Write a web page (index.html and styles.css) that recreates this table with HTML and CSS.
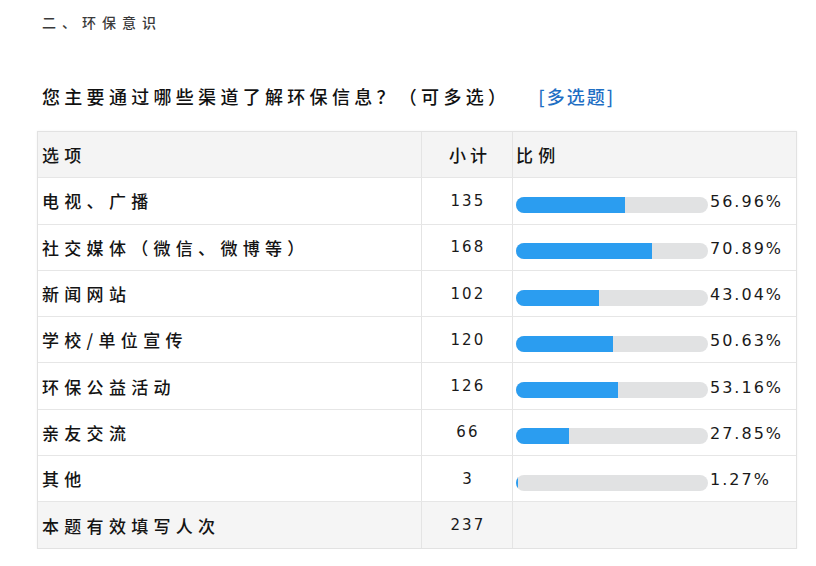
FILE: index.html
```html
<!DOCTYPE html>
<html lang="zh">
<head>
<meta charset="utf-8">
<link rel="stylesheet" href="styles.css">
</head>
<body>
<div class="page">
  <div class="section-title">二、环保意识</div>
  <div class="question">您主要通过哪些渠道了解环保信息？（可多选）<span class="qtype">[多选题]</span></div>
  <div class="table">
    <div class="row head">
      <div class="cell c-opt">选项</div>
      <div class="cell c-num">小计</div>
      <div class="cell c-pct">比例</div>
    </div>
    <div class="row">
      <div class="cell c-opt">电视、广播</div>
      <div class="cell c-num num">135</div>
      <div class="cell c-pct"><div class="bar"><div class="fill" style="width:56.96%"></div></div><span class="pct">56.96%</span></div>
    </div>
    <div class="row">
      <div class="cell c-opt">社交媒体（微信、微博等）</div>
      <div class="cell c-num num">168</div>
      <div class="cell c-pct"><div class="bar"><div class="fill" style="width:70.89%"></div></div><span class="pct">70.89%</span></div>
    </div>
    <div class="row">
      <div class="cell c-opt">新闻网站</div>
      <div class="cell c-num num">102</div>
      <div class="cell c-pct"><div class="bar"><div class="fill" style="width:43.04%"></div></div><span class="pct">43.04%</span></div>
    </div>
    <div class="row">
      <div class="cell c-opt">学校/单位宣传</div>
      <div class="cell c-num num">120</div>
      <div class="cell c-pct"><div class="bar"><div class="fill" style="width:50.63%"></div></div><span class="pct">50.63%</span></div>
    </div>
    <div class="row">
      <div class="cell c-opt">环保公益活动</div>
      <div class="cell c-num num">126</div>
      <div class="cell c-pct"><div class="bar"><div class="fill" style="width:53.16%"></div></div><span class="pct">53.16%</span></div>
    </div>
    <div class="row">
      <div class="cell c-opt">亲友交流</div>
      <div class="cell c-num num">66</div>
      <div class="cell c-pct"><div class="bar"><div class="fill" style="width:27.85%"></div></div><span class="pct">27.85%</span></div>
    </div>
    <div class="row">
      <div class="cell c-opt">其他</div>
      <div class="cell c-num num">3</div>
      <div class="cell c-pct"><div class="bar"><div class="fill" style="width:1.27%"></div></div><span class="pct">1.27%</span></div>
    </div>
    <div class="row foot">
      <div class="cell c-opt">本题有效填写人次</div>
      <div class="cell c-num num">237</div>
      <div class="cell c-pct"></div>
    </div>
  </div>
</div>
</body>
</html>
```

FILE: styles.css
```css
* { box-sizing: border-box; }
html, body {
  margin: 0;
  padding: 0;
  background: #ffffff;
}
body {
  font-family: "Noto Sans CJK SC", "Noto Sans", sans-serif;
  color: #141414;
}
.page {
  padding: 12px 0 0 0;
}
.section-title {
  padding-left: 42px;
  font-size: 14px;
  line-height: 20px;
  letter-spacing: 6px;
  color: #3a3a3a;
  font-weight: 500;
  height: 20px;
}
.question {
  margin-top: 52px;
  padding-left: 42px;
  font-size: 18px;
  line-height: 24px;
  height: 24px;
  letter-spacing: 4.3px;
  color: #111111;
  font-weight: 500;
  white-space: nowrap;
}
.qtype {
  margin-left: 28px;
  color: #1f6fc4;
  letter-spacing: 2px;
}
.table {
  margin: 23px 0 0 37px;
  width: 760px;
  border: 1px solid #e2e2e2;
  box-shadow: 0 0 2px rgba(0,0,0,0.06);
}
.row {
  display: grid;
  grid-template-columns: 384px 91px 1fr;
  height: 46.3px;
  border-top: 1px solid #e6e6e6;
  background: #ffffff;
}
.row.head {
  border-top: none;
  height: 45.3px;
  background: #f4f4f4;
}
.row.foot {
  background: #f5f5f5;
}
.cell {
  display: flex;
  align-items: center;
  font-size: 17px;
  letter-spacing: 5.3px;
  font-weight: 500;
  white-space: nowrap;
}
.c-opt {
  padding-left: 4px;
  border-right: 1px solid #e4e4e4;
}
.c-num {
  justify-content: center;
  border-right: 1px solid #e4e4e4;
}
.head .c-num {
  padding-left: 6px;
  letter-spacing: 4px;
}
.c-pct {
  padding-left: 3px;
}
.num {
  font-family: "DejaVu Sans", sans-serif;
  font-size: 15px;
  font-weight: normal;
  letter-spacing: 2.2px;
  padding-left: 2px;
  color: #1a1a1a;
}
.bar {
  width: 192px;
  height: 16px;
  border-radius: 8px;
  background: #e1e2e3;
  overflow: hidden;
  flex: none;
  margin-top: 8px;
}
.fill {
  height: 100%;
  background: #2b9df0;
}
.pct {
  margin-left: 2px;
  margin-top: 2px;
  font-family: "DejaVu Sans", sans-serif;
  font-size: 16px;
  font-weight: normal;
  letter-spacing: 2px;
  color: #1a1a1a;
}
```
